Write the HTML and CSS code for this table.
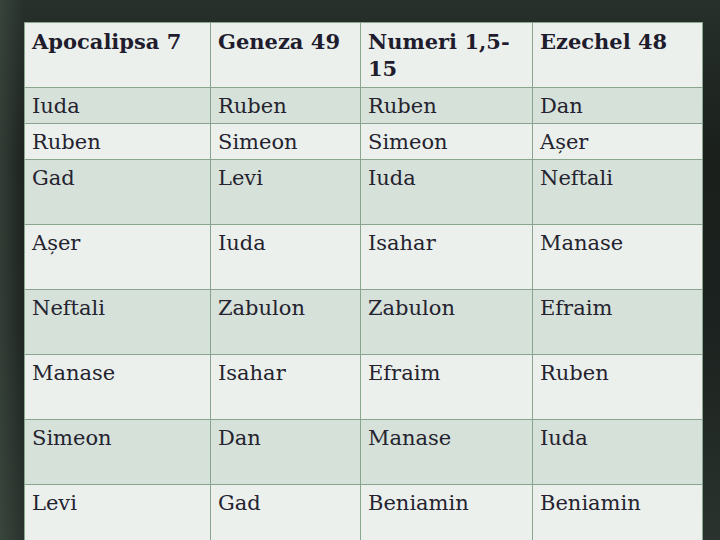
FILE: index.html
```html
<!DOCTYPE html>
<html lang="ro">
<head>
<meta charset="utf-8">
<title>Seminții</title>
<link rel="stylesheet" href="styles.css">
</head>
<body>
<div class="slide">
  <table class="tribes">
    <colgroup>
      <col class="c1"><col class="c2"><col class="c3"><col class="c4">
    </colgroup>
    <thead>
      <tr class="tall light">
        <th>Apocalipsa 7</th>
        <th>Geneza 49</th>
        <th>Numeri 1,5-15</th>
        <th>Ezechel 48</th>
      </tr>
    </thead>
    <tbody>
      <tr class="short dark"><td>Iuda</td><td>Ruben</td><td>Ruben</td><td>Dan</td></tr>
      <tr class="short light"><td>Ruben</td><td>Simeon</td><td>Simeon</td><td>Așer</td></tr>
      <tr class="tall dark"><td>Gad</td><td>Levi</td><td>Iuda</td><td>Neftali</td></tr>
      <tr class="tall light"><td>Așer</td><td>Iuda</td><td>Isahar</td><td>Manase</td></tr>
      <tr class="tall dark"><td>Neftali</td><td>Zabulon</td><td>Zabulon</td><td>Efraim</td></tr>
      <tr class="tall light"><td>Manase</td><td>Isahar</td><td>Efraim</td><td>Ruben</td></tr>
      <tr class="tall dark"><td>Simeon</td><td>Dan</td><td>Manase</td><td>Iuda</td></tr>
      <tr class="tall light"><td>Levi</td><td>Gad</td><td>Beniamin</td><td>Beniamin</td></tr>
    </tbody>
  </table>
</div>
</body>
</html>
```

FILE: styles.css
```css
html, body {
  margin: 0;
  padding: 0;
  height: 100%;
  overflow: hidden;
}

body {
  background-color: #1d2320;
  background-image:
    linear-gradient(90deg, rgba(70, 84, 74, 0.55) 0px, rgba(40, 48, 43, 0.2) 24px, rgba(0, 0, 0, 0) 80px),
    linear-gradient(180deg, #27302b 0%, #1a1f1c 30%, #1c221f 60%, #2a332d 100%);
}

.slide {
  padding: 22px 0 0 24px;
}

.tribes {
  border-collapse: collapse;
  table-layout: fixed;
  width: 678px;
  font-family: "DejaVu Serif", "Liberation Serif", serif;
  font-size: 21px;
  line-height: 27px;
  color: #24232f;
}

.c1 { width: 186px; }
.c2 { width: 150px; }
.c3 { width: 172px; }
.c4 { width: 170px; }

.tribes th,
.tribes td {
  border: 1.5px solid #89a58f;
  padding: 4.5px 6px 0 7px;
  text-align: left;
  vertical-align: top;
  font-weight: normal;
}

.tribes th {
  font-weight: bold;
  color: #1f1d2d;
}

.tall { height: 65px; }
.short { height: 36px; }

.light { background: #ecf0ed; }
.dark { background: #d6e1d9; }
```
